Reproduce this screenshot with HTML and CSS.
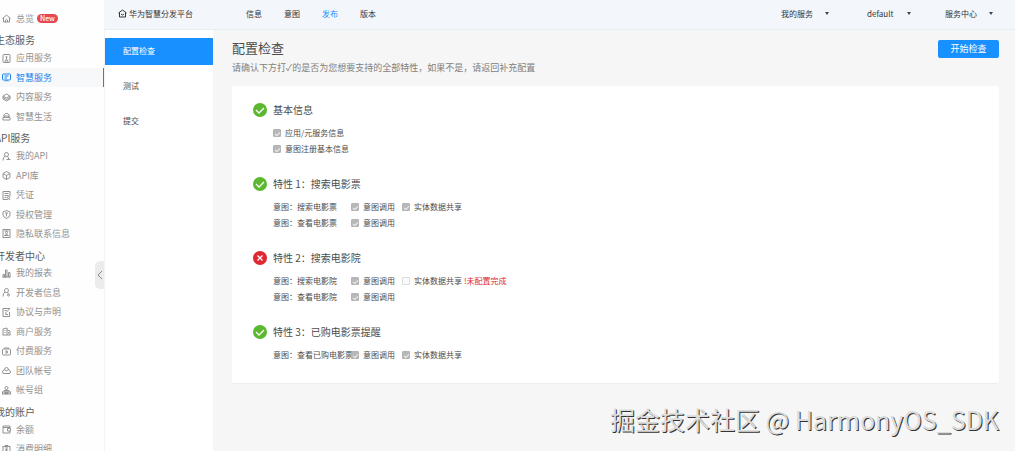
FILE: index.html
```
<!DOCTYPE html>
<html lang="zh-CN">
<head>
<meta charset="utf-8">
<title>华为智慧分发平台</title>
<link rel="stylesheet" href="styles.css">
</head>
<body>
<div class="app">
  <aside class="sidebar">
    <nav class="side-nav">
      <a class="side-item" href="#"><svg class="icon" viewBox="0 0 18 18"><path d="M1 9 9 2l8 7M3 8v8h12V8M7 16v-4q2-3 4 0v4"/></svg>总览<span class="badge">New</span></a>
      <h2 class="side-title">生态服务</h2>
      <a class="side-item" href="#"><svg class="icon" viewBox="0 0 18 18"><rect x="2" y="1" width="14" height="16" rx="2"/><path d="M6 13q3-4 6 0M9 5v5M7 6h4M5 14h8"/></svg>应用服务</a>
      <a class="side-item active" href="#"><svg class="icon" viewBox="0 0 18 18"><rect x="1" y="2" width="16" height="12" rx="2"/><path d="M5 6h8M5 10h5M6 17l3-3 3 3"/></svg>智慧服务</a>
      <a class="side-item" href="#"><svg class="icon" viewBox="0 0 18 18"><path d="m9 2 7 4-7 4-7-4zM2 6v6l7 4 7-4V6M2 9l7 4 7-4"/></svg>内容服务</a>
      <a class="side-item" href="#"><svg class="icon" viewBox="0 0 18 18"><path d="M3 7q6-9 12 0M2 8h14M5 8v3M13 8v3M2 11h14v5H2z"/></svg>智慧生活</a>
      <h2 class="side-title">API服务</h2>
      <a class="side-item" href="#"><svg class="icon" viewBox="0 0 18 18"><circle cx="9" cy="5" r="4"/><path d="M6 8q-4 3-4 9M11 9l2 3M9 15h8M13 12v3"/></svg>我的API</a>
      <a class="side-item" href="#"><svg class="icon" viewBox="0 0 18 18"><path d="m9 1 7 4v8l-7 4-7-4V5zM2 5l7 4 7-4M9 9v8"/></svg>API库</a>
      <a class="side-item" href="#"><svg class="icon" viewBox="0 0 18 18"><path d="M10 17H2V1h14v10M5 5h8M5 9h8M5 13h4"/><circle cx="13" cy="13" r="2"/><path d="m12 15-1 3M14 15l2 3"/></svg>凭证</a>
      <a class="side-item" href="#"><svg class="icon" viewBox="0 0 18 18"><path d="m9 1 7 3v6q-1 5-7 7-6-2-7-7V4z"/><path d="M6 6h6M9 6v7"/></svg>授权管理</a>
      <a class="side-item" href="#"><svg class="icon" viewBox="0 0 18 18"><rect x="2" y="1" width="14" height="16"/><circle cx="9" cy="7" r="2"/><path d="M5 13q4-5 8 0zM5 4h8"/></svg>隐私联系信息</a>
      <h2 class="side-title">开发者中心</h2>
      <a class="side-item" href="#"><svg class="icon" viewBox="0 0 18 18"><path d="M2 16v-5h3v5zM7 16V2h3v14zM13 16V7h3v9zM1 16h16"/></svg>我的报表</a>
      <a class="side-item" href="#"><svg class="icon" viewBox="0 0 18 18"><circle cx="9" cy="5" r="4"/><path d="M6 8q-4 3-4 9M11 9l2 3"/><circle cx="13" cy="14" r="2"/></svg>开发者信息</a>
      <a class="side-item" href="#"><svg class="icon" viewBox="0 0 18 18"><path d="M15 8v9H2V1h14M7 12l1-3 7-7M5 5h4M7 13h5"/></svg>协议与声明</a>
      <a class="side-item" href="#"><svg class="icon" viewBox="0 0 18 18"><path d="M2 16V4l8-2v14M10 6l6 2v8M1 16h16M5 7h2M5 11h2M13 10v3"/></svg>商户服务</a>
      <a class="side-item" href="#"><svg class="icon" viewBox="0 0 18 18"><rect x="1" y="4" width="16" height="12" rx="2"/><path d="M4 2h10M8 7l4 3-4 3z"/></svg>付费服务</a>
      <a class="side-item" href="#"><svg class="icon" viewBox="0 0 18 18"><path d="M5 8q0-5 4-5t4 5M5 7q-4 2-4 5 0 3 3 3h10q3 0 3-3 0-3-4-5M5 8q4 3 8 0"/></svg>团队帐号</a>
      <a class="side-item" href="#"><svg class="icon" viewBox="0 0 18 18"><circle cx="9" cy="4" r="3"/><path d="M9 7v4M4 12V9h10v3"/><rect x="1" y="12" width="5" height="4"/><rect x="7" y="12" width="4" height="4"/><rect x="12" y="12" width="5" height="4"/></svg>帐号组</a>
      <h2 class="side-title">我的账户</h2>
      <a class="side-item" href="#"><svg class="icon" viewBox="0 0 18 18"><path d="M16 6V2H2v14h14v-4M2 5h14M17 7h-6v5h6z"/></svg>余额</a>
      <a class="side-item" href="#"><svg class="icon" viewBox="0 0 18 18"><rect x="2" y="3" width="14" height="14"/><path d="M6 1h6v3H6zM6 8h6M6 12h6M9 8v6"/></svg>消费明细</a>
    </nav>
    <button class="collapse" type="button" aria-label="收起菜单"><svg viewBox="0 0 6 10"><path d="M5 1 1 5l4 4"/></svg></button>
  </aside>

  <div class="workspace">
    <header class="topbar">
      <a class="brand" href="#"><svg class="icon" viewBox="0 0 18 18"><path d="M1 8 9 2l8 6M3 7v9h12V7M6 10q3 4 6 0"/></svg>华为智慧分发平台</a>
      <nav class="tabs">
        <a href="#">信息</a>
        <a href="#">意图</a>
        <a class="current" href="#">发布</a>
        <a href="#">版本</a>
      </nav>
      <div class="menus">
        <div class="menu"><select aria-label="我的服务"><option>我的服务</option></select></div>
        <div class="menu"><select aria-label="项目"><option>default</option></select></div>
        <div class="menu"><select aria-label="服务中心"><option>服务中心</option></select></div>
      </div>
    </header>

    <div class="body">
      <nav class="steps">
        <a class="step selected" href="#">配置检查</a>
        <a class="step" href="#">测试</a>
        <a class="step" href="#">提交</a>
      </nav>

      <main class="content">
        <div class="page-head">
          <div>
            <h1>配置检查</h1>
            <p>请确认下方打✓的是否为您想要支持的全部特性，如果不是，请返回补充配置</p>
          </div>
          <button class="primary" type="button">开始检查</button>
        </div>

        <div class="card">
          <section class="feature">
            <h3><svg class="status ok" viewBox="0 0 14 14"><circle cx="7" cy="7" r="7"/><path d="m3 7 3 3 5-5"/></svg>基本信息</h3>
            <div class="row"><label class="check"><input type="checkbox" checked disabled>应用/元服务信息</label></div>
            <div class="row"><label class="check"><input type="checkbox" checked disabled>意图注册基本信息</label></div>
          </section>
          <section class="feature">
            <h3><svg class="status ok" viewBox="0 0 14 14"><circle cx="7" cy="7" r="7"/><path d="m3 7 3 3 5-5"/></svg>特性 1：搜索电影票</h3>
            <div class="row"><span class="intent">意图：搜索电影票</span><label class="check"><input type="checkbox" checked disabled>意图调用</label><label class="check"><input type="checkbox" checked disabled>实体数据共享</label></div>
            <div class="row"><span class="intent">意图：查看电影票</span><label class="check"><input type="checkbox" checked disabled>意图调用</label></div>
          </section>
          <section class="feature">
            <h3><svg class="status bad" viewBox="0 0 14 14"><circle cx="7" cy="7" r="7"/><path d="m4.500 4.500 5 5M9.500 4.500l-5 5"/></svg>特性 2：搜索电影院</h3>
            <div class="row"><span class="intent">意图：搜索电影院</span><label class="check"><input type="checkbox" checked disabled>意图调用</label><label class="check"><input type="checkbox" disabled>实体数据共享</label><span class="error">!未配置完成</span></div>
            <div class="row"><span class="intent">意图：查看电影院</span><label class="check"><input type="checkbox" checked disabled>意图调用</label></div>
          </section>
          <section class="feature">
            <h3><svg class="status ok" viewBox="0 0 14 14"><circle cx="7" cy="7" r="7"/><path d="m3 7 3 3 5-5"/></svg>特性 3：已购电影票提醒</h3>
            <div class="row"><span class="intent">意图：查看已购电影票</span><label class="check"><input type="checkbox" checked disabled>意图调用</label><label class="check"><input type="checkbox" checked disabled>实体数据共享</label></div>
          </section>
        </div>
      </main>
    </div>
  </div>
</div>
<div class="watermark">掘金技术社区 @ HarmonyOS_SDK</div>
</body>
</html>
```

FILE: styles.css
```
* {
  box-sizing: border-box;
}

body {
  margin: 0;
  font-family: "Noto Sans CJK SC", "Noto Sans", sans-serif;
  font-size: 8px;
  line-height: 16px;
  color: #4c4c4c;
  background: #f6f6f6;
}

h1,
h2,
h3,
p {
  margin: 0;
  font-weight: 400;
}

a {
  color: inherit;
  text-decoration: none;
}

button,
select,
input {
  margin: 0;
  padding: 0;
  border: 0;
  font: inherit;
  color: inherit;
}

.app {
  display: flex;
  height: 100vh;
  overflow: hidden;
}

.icon {
  flex: none;
  width: 9px;
  height: 9px;
  fill: none;
  stroke: currentColor;
  stroke-width: 2;
}

/* Left navigation */
.sidebar {
  position: relative;
  flex: none;
  width: 104px;
  padding-top: 9px;
  background: #fefefe;
}

.side-nav {
  display: grid;
  grid-auto-rows: 1fr;
  height: calc(100vh - 1px);
}

.side-item {
  display: flex;
  align-items: center;
  gap: 5px;
  padding-left: 2px;
  font-size: 9px;
  color: #929292;
  white-space: nowrap;
}

.side-item.active {
  color: #1c86ee;
  background: #f6f8fa;
  border-right: 1px solid #1c86ee;
}

.side-title {
  padding-top: 4px;
  margin-left: -5px;
  font-size: 10px;
  color: #5c5c5c;
  white-space: nowrap;
}

.badge {
  height: 9px;
  padding: 0 3px;
  margin-left: -2px;
  border-radius: 5px;
  background: #e5484f;
  color: #fff;
  font-size: 7px;
  font-weight: 500;
  line-height: 9px;
}

.collapse {
  position: absolute;
  top: 261px;
  right: 0;
  display: grid;
  place-items: center;
  width: 9px;
  height: 28px;
  border-radius: 5px 0 0 5px;
  background: #ececec;
}

.collapse svg {
  width: 6px;
  height: 10px;
  fill: none;
  stroke: #888;
}

/* Top bar */
.workspace {
  display: flex;
  flex: 1;
  flex-direction: column;
  min-width: 0;
}

.topbar {
  display: flex;
  align-items: center;
  height: 30px;
  padding: 0 22px 2px 14px;
  background: #f3f6fa;
  border-bottom: 1px solid #e8eff2;
  color: #333;
}

.brand {
  display: flex;
  align-items: center;
  gap: 2px;
  width: 128px;
}

.tabs {
  display: flex;
  gap: 22px;
}

.tabs .current {
  color: #1890ff;
}

.menus {
  display: flex;
  gap: 34px;
  margin-left: auto;
}

.menu {
  display: flex;
  align-items: center;
  gap: 12px;
}

.menu select {
  appearance: none;
  min-width: 32px;
  background: none;
}

.menu:first-child {
  margin-right: 4px;
}

.menu::after {
  content: "";
  border: 2px solid transparent;
  border-top: 3px solid #444;
  border-bottom: 0;
}

.menu:nth-child(2) {
  gap: 8px;
}

/* Step list */
.body {
  display: flex;
  flex: 1;
}

.steps {
  display: flex;
  flex: none;
  flex-direction: column;
  gap: 8px;
  width: 109px;
  padding-top: 8px;
  background: #fff;
  border-left: 1px solid #f4f4f4;
}

.step {
  padding: 5px 18px 6px;
}

.step.selected {
  background: #1890ff;
  color: #fff;
}

/* Page content */
.content {
  flex: 1;
  padding: 8px 16px 0 19px;
}

.page-head {
  display: flex;
  justify-content: space-between;
  align-items: flex-start;
  height: 48px;
}

.page-head h1 {
  font-size: 13px;
  line-height: 20px;
}

.page-head p {
  font-size: 9px;
  line-height: 20px;
  color: #808080;
}

.primary {
  width: 61px;
  height: 18px;
  margin-top: 2px;
  border-radius: 2px;
  background: #1890ff;
  color: #fff;
  font-size: 9px;
  line-height: 16px;
}

.card {
  display: flex;
  flex-direction: column;
  gap: 20px;
  padding: 17px 21px 20px;
  background: #fff;
  border-radius: 2px;
  box-shadow: 0 1px 1px #ededed;
}

.feature h3 {
  display: flex;
  align-items: center;
  gap: 6px;
  margin-bottom: 8px;
  font-size: 10px;
  line-height: 14px;
}

.status {
  width: 14px;
  height: 14px;
}

.status path {
  fill: none;
  stroke: #fff;
  stroke-width: 1.3;
}

.status.ok {
  fill: #5cb82e;
}

.status.bad {
  fill: #e02830;
}

.row {
  display: flex;
  gap: 7px;
  padding-left: 20px;
  white-space: nowrap;
}

.intent {
  width: 71px;
}

.check {
  display: flex;
  align-items: center;
  gap: 4px;
}

.check input {
  display: grid;
  place-items: center;
  appearance: none;
  width: 8px;
  height: 8px;
  border: 1px solid #ddd;
  border-radius: 1px;
  background: #fafafa;
}

.check input:checked {
  border-color: #b4b4b4;
  background: #b8b8b8;
}

.check input:checked::after {
  content: "";
  width: 4px;
  height: 2px;
  border: solid #eee;
  border-width: 0 0 1px 1px;
  transform: rotate(-45deg);
}

.error {
  margin-left: -5px;
  color: #e02830;
}

.watermark {
  position: absolute;
  right: 16px;
  bottom: 14px;
  font-size: 25px;
  line-height: 36px;
  color: #dcdcdc;
  text-shadow: 1px 1px 0 #333;
  white-space: nowrap;
}
```
